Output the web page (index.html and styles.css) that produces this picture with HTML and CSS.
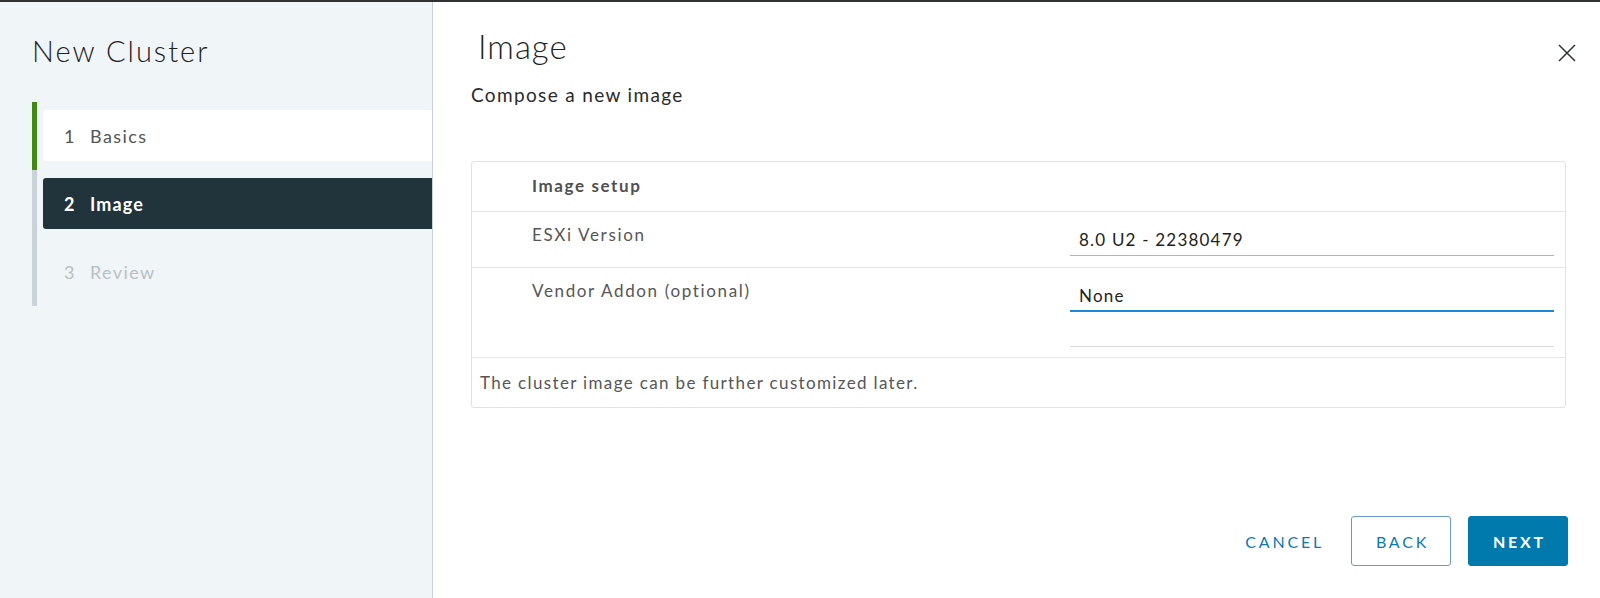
FILE: index.html
```html
<!DOCTYPE html>
<html lang="en">
<head>
<meta charset="utf-8">
<title>New Cluster</title>
<link rel="stylesheet" href="styles.css">
</head>
<body>
<div class="top-line"></div>
<div class="wizard">
  <aside class="sidebar">
    <h1 class="wizard-title">New Cluster</h1>
    <ol class="steps">
      <li class="step done"><div class="step-box"><span class="num">1</span><span class="label">Basics</span></div></li>
      <li class="step active"><div class="step-box"><span class="num">2</span><span class="label">Image</span></div></li>
      <li class="step pending"><div class="step-box"><span class="num">3</span><span class="label">Review</span></div></li>
    </ol>
  </aside>
  <main class="content">
    <header class="content-header">
      <h2 class="page-title">Image</h2>
      <button class="close" aria-label="Close">
        <svg width="18" height="18" viewBox="0 0 18 18"><path d="M1 1 L17 17 M17 1 L1 17" stroke="#2d3338" stroke-width="1.5" fill="none"/></svg>
      </button>
    </header>
    <p class="subtitle">Compose a new image</p>
    <section class="card">
      <div class="row head-row"><span class="head">Image setup</span></div>
      <div class="row field-row">
        <span class="field-label">ESXi Version</span>
        <div class="field-control">
          <div class="input">8.0 U2 - 22380479</div>
        </div>
      </div>
      <div class="row field-row tall">
        <span class="field-label">Vendor Addon (optional)</span>
        <div class="field-control">
          <div class="input focused">None</div>
          <div class="input hint"></div>
        </div>
      </div>
      <div class="row foot-row">The cluster image can be further customized later.</div>
    </section>
    <footer class="actions">
      <button class="btn link">CANCEL</button>
      <button class="btn outline">BACK</button>
      <button class="btn primary">NEXT</button>
    </footer>
  </main>
</div>
</body>
</html>
```
FILE: styles.css
```css
* { box-sizing: border-box; }
html, body { margin: 0; padding: 0; }
body {
  width: 1600px;
  height: 598px;
  overflow: hidden;
  font-family: Lato, "Open Sans", sans-serif;
  color: #333;
  background: #fff;
}
.top-line { height: 2px; background: #2f3133; }
.wizard { display: flex; height: 596px; }

.sidebar {
  width: 433px;
  flex: none;
  background: #f0f5f8;
  border-right: 1px solid #c7d1d7;
  padding: 29px 0 0 32px;
}
.wizard-title {
  margin: 0;
  font-weight: 300;
  font-size: 29px;
  line-height: 40px;
  letter-spacing: 2px;
  color: #1f1f1f;
}
.steps {
  list-style: none;
  margin: 31px 0 0;
  padding: 0;
}
.step {
  border-left: 5px solid #c9d2d8;
  padding: 8px 0 9px 6px;
}
.step.done { border-left-color: #3f8a12; }
.step-box {
  height: 51px;
  display: flex;
  align-items: center;
  border-radius: 3px 0 0 3px;
  padding-left: 21px;
  font-size: 18px;
  letter-spacing: 1.4px;
}
.num { width: 26px; }
.done .step-box { background: #fff; color: #555; }
.active .step-box { background: #21333b; color: #fff; font-weight: 700; letter-spacing: 1.1px; }
.pending .step-box { color: #b9bfc3; }

.content {
  flex: 1;
  padding: 22px 34px 0 38px;
  display: flex;
  flex-direction: column;
}
.content-header {
  display: flex;
  align-items: center;
  justify-content: space-between;
}
.page-title {
  margin: 0;
  padding-left: 7px;
  font-weight: 300;
  font-size: 33px;
  line-height: 44px;
  letter-spacing: 1px;
  color: #1f1f1f;
}
.close {
  border: 0;
  background: none;
  padding: 0;
  margin: 14px -10px 0 0;
  width: 18px;
  height: 18px;
}
.close svg { display: block; }
.subtitle {
  margin: 15px 0 0;
  font-size: 19px;
  line-height: 24px;
  letter-spacing: 1.35px;
  color: #2b2b2b;
}
.card {
  margin-top: 54px;
  border: 1px solid #dde3e7;
  border-radius: 3px;
}
.row { border-bottom: 1px solid #e3e8eb; }
.row:last-child { border-bottom: 0; }
.head-row {
  height: 50px;
  display: flex;
  align-items: center;
  padding-left: 60px;
  padding-bottom: 2px;
}
.head {
  font-size: 17px;
  font-weight: 700;
  letter-spacing: 1.6px;
  color: #505050;
}
.field-row {
  display: flex;
  height: 56px;
  padding-left: 60px;
}
.field-row.tall { height: 90px; }
.field-label {
  width: 538px;
  flex: none;
  padding-top: 12px;
  font-size: 17px;
  letter-spacing: 1.65px;
  color: #565656;
}
.field-control {
  flex: 1;
  padding-right: 11px;
  padding-top: 16px;
}
.input {
  height: 28px;
  padding-left: 9px;
  font-size: 17px;
  line-height: 24px;
  letter-spacing: 1.2px;
  color: #222;
  border-bottom: 1px solid #b3b3b3;
}
.input.focused {
  height: 28px;
  border-bottom: 2px solid #1c8ad6;
}
.input.hint { height: 35px; border-bottom: 1px solid #dcdcdc; }
.foot-row {
  height: 49px;
  display: flex;
  align-items: center;
  padding-left: 8px;
  font-size: 17px;
  letter-spacing: 1.35px;
  color: #565656;
}

.actions {
  margin-top: 108px;
  display: flex;
  justify-content: flex-end;
  gap: 17px;
  margin-right: -2px;
}
.btn {
  height: 50px;
  border-radius: 3px;
  font-family: Lato, "Open Sans", sans-serif;
  font-size: 16px;
  letter-spacing: 2.8px;
  padding: 0 0 0 3px;
  background: none;
  border: 1px solid transparent;
  color: #0a79b2;
}
.btn.link { padding: 0 22px; margin-right: -13px; }
.btn.outline { border-color: #6a9cc6; width: 100px; }
.btn.primary {
  background: #0079ad;
  border-color: #0079ad;
  color: #fff;
  font-weight: 700;
  width: 100px;
}
```
